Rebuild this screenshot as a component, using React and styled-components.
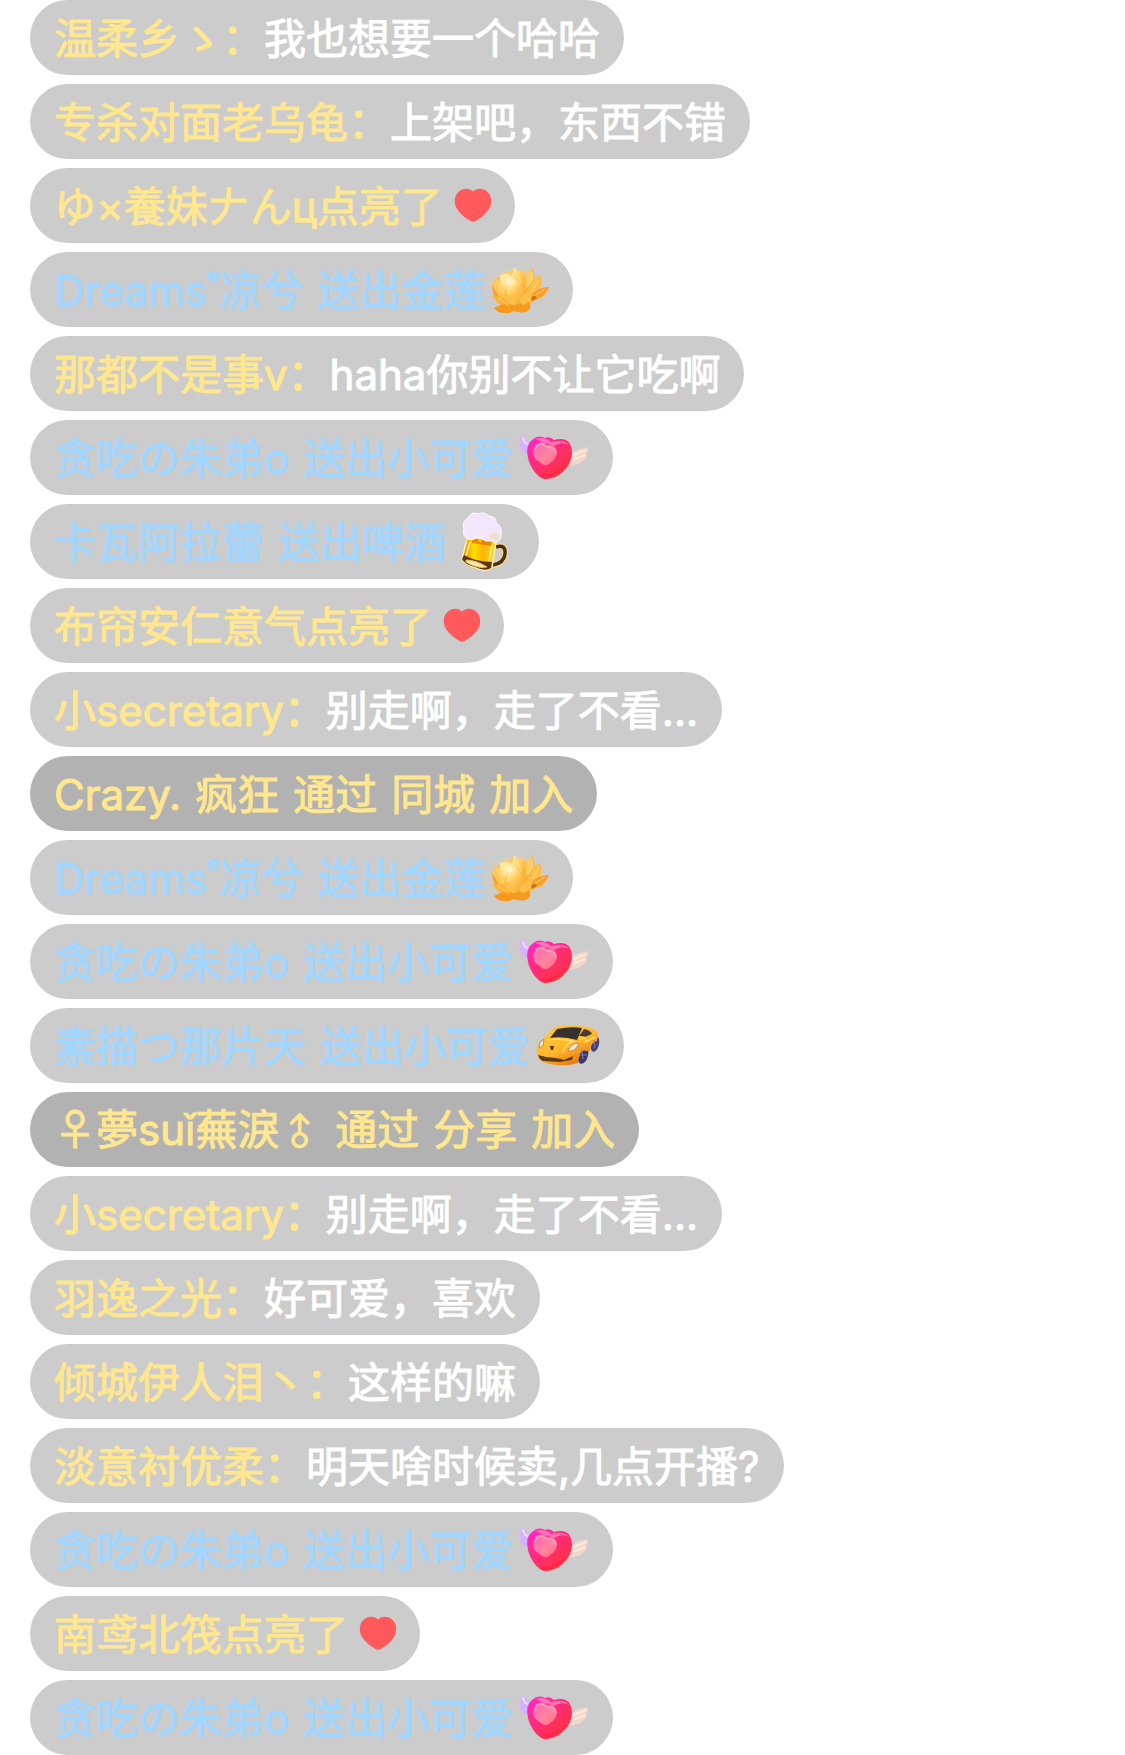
import React from 'react';
import styled, { createGlobalStyle } from 'styled-components';

const GlobalStyle = createGlobalStyle`
  * { box-sizing: border-box; }
  body {
    margin: 0;
    background: #fff;
    font-family: Inter, "Noto Sans CJK SC", "Noto Sans CJK TC", "Noto Sans CJK JP", sans-serif;
  }
`;

const Feed = styled.ul`
  display: flex;
  flex-direction: column;
  align-items: flex-start;
  gap: 9px;
  margin: 0;
  padding: 0 30px;
  list-style: none;
`;

const Bubble = styled.li`
  display: flex;
  align-items: center;
  height: 75px;
  padding: 0 24px;
  border-radius: 38px;
  background: ${(p) => (p.$join ? '#b2b2b2' : '#ccc')};
  color: ${(p) => (p.$gift ? '#a0d6ff' : '#ffe78f')};
  font-size: 42px;
  font-weight: 400;
  line-height: 60px;
  white-space: pre;
`;

const Label = styled.span`
  display: flex;
  gap: 14px;
  padding-top: 2px;
  -webkit-text-stroke: 1px currentColor;
`;

const Message = styled(Label)`
  color: #fff;
`;

const Upright = styled.span`
  display: inline-block;
  width: 42px;
  font-size: 36px;
  text-align: center;
  transform: rotate(-45deg);
`;

const Icon = styled.svg`
  flex: none;
  display: block;
  width: ${(p) => p.$w}px;
  height: 75px;
`;

const Like = () => (
  <Icon $w={48} viewBox="-2 0 48 75" role="img" aria-label="heart">
    <path
      d="M28 23.500C24 19.500 18 20 14 23.500C8.500 28 9 36 12 41C15.500 46.500 21 50.500 25.500 53Q28 54.500 30.500 53C35 50.500 40.500 46.500 44 41C47 36 47.500 28 42 23.500C38 20 32 19.500 28 23.500Z"
      fill="#ff595b"
    />
  </Icon>
);

const Lotus = () => (
  <Icon $w={64} viewBox="2 0 64 75" role="img" aria-label="lotus">
    <defs>
      <linearGradient id="petal" x1="0" y1="0" x2="1" y2="1">
        <stop offset="0" stopColor="#fff0a8" />
        <stop offset="0.5" stopColor="#ffc651" />
        <stop offset="1" stopColor="#f9a02a" />
      </linearGradient>
      <radialGradient id="petalGlow">
        <stop offset="0" stopColor="#fffbe0" />
        <stop offset="1" stopColor="#ffe47a" stopOpacity="0" />
      </radialGradient>
    </defs>
    <path d="M11 30L18 22L31 18L42 24L54 26L57 37L50 50L38 56L24 55L14 48Z" fill="#ffb641" />
    <path d="M38 32L49 15Q52 21 51 27L57 23Q60 32 56 37L66 35Q62 47 52 48Q45 52 38 48Z" fill="#ffad2f" />
    <path d="M49 16Q39 25 40 39L51 28Z" fill="#ffca5e" />
    <path d="M57 23Q45 31 44 44Q53 44 58 34Z" fill="#ffbd4b" />
    <path d="M66 35Q53 35 45 46Q59 49 66 35Z" fill="#f9a02c" />
    <path d="M47 46L52 43L54 46L50 49Z" fill="#cf7412" />
    <path d="M28 27L31 15L36 19L41 18Q45 28 42 36L34 43Z" fill="url(#petal)" />
    <path d="M9 33Q17 34 21 43L19 52Q9 45 9 33Z" fill="#f6a329" />
    <path d="M9 33L11 26Q24 28 27 43L20 51Z" fill="#ffc75a" />
    <path d="M17 23Q28 19 34 32L27 46Q16 36 17 23Z" fill="url(#petal)" />
    <path d="M9 44Q23 42 30 54L26 59Q15 53 9 44Z" fill="#ffb238" />
    <path d="M11 56Q22 49 33 54Q31 62 22 61Q14 61 11 56Z" fill="#f99818" />
    <path d="M27 57Q32 46 45 49Q51 56 43 60Q35 62 27 57Z" fill="#f69a20" />
    <path d="M31 25Q44 34 42 48Q34 57 23 48Q20 37 31 25Z" fill="url(#petal)" stroke="#f6a52c" strokeWidth=".7" />
    <path d="M20 42Q29 40 33 53Q24 54 20 42M36 50Q38 41 49 40Q50 50 40 53Z" fill="#ffc04b" />
    <path d="M19 27L26 40M34 20L38 32M13 29L21 42M50 20L45 35M56 28L49 39M15 46L26 54M62 37L51 44" fill="none" stroke="#fff0a0" strokeWidth="1" opacity=".6" />
    <circle cx="26" cy="29" r="13" fill="url(#petalGlow)" />
  </Icon>
);

const WingedHeart = () => (
  <Icon $w={76} viewBox="2 0 76 75" role="img" aria-label="winged heart">
    <defs>
      <linearGradient id="loveBody" x1="0" y1="0" x2=".8" y2="1">
        <stop offset="0" stopColor="#ff27d9" />
        <stop offset=".4" stopColor="#ff2a86" />
        <stop offset="1" stopColor="#ff3434" />
      </linearGradient>
      <linearGradient id="loveFace" x1="0" y1="0" x2="1" y2="1">
        <stop offset="0" stopColor="#ff62b8" />
        <stop offset=".6" stopColor="#ff86a0" />
        <stop offset="1" stopColor="#ff5f80" />
      </linearGradient>
    </defs>
    <path d="M18 35Q8 32 9 25Q7 20 12 15Q15 17 16 21L22 23Z" fill="#d4b3ff" />
    <path d="M12 17Q12 23 19 25" fill="none" stroke="#ecdcff" strokeWidth="2" />
    <path d="M58 33Q64 32 68 29L76 27Q78 30 76 33L75 39L71 41Q69 45 65 44Q61 47 56 44Z" fill="#f1d6c9" />
    <path d="M60 36Q68 33 75 30M60 40Q68 38 74 35" fill="none" stroke="#fff1e7" strokeWidth="2" opacity=".7" />
    <path d="M34 18Q39 16 43 20Q55 17 59 24Q63 32 59 42C54 53 42 60 33 59C26 57 19 47 17 38Q14 25 21 20Q28 14 34 18Z" fill="url(#loveBody)" />
    <path d="M25 19Q33 16 40 22Q54 19 58 25Q50 21 43 26L31 22Z" fill="#ff91bd" opacity=".7" />
    <path d="M25 24Q32 20 36 25Q45 24 46 32Q46 39 38 44Q34 47 30 43Q21 38 22 31Z" fill="url(#loveFace)" />
    <path d="M24 30Q25 24 31 24L36 27Q43 26 45 33" fill="none" stroke="#ff9fbd" strokeWidth="1.500" />
    <path d="M50 22L52 32M55 24L57 32" stroke="#dc2f59" strokeWidth="1" opacity=".5" />
    <path d="M28 54Q41 58 55 43Q47 56 34 58Z" fill="#ff1743" opacity=".5" />
  </Icon>
);

const Beer = () => (
  <Icon $w={69} viewBox="2 0 69 75" role="img" aria-label="beer">
    <defs>
      <linearGradient id="beer" x1="0" y1="0" x2="1" y2="0">
        <stop offset="0" stopColor="#e47a00" />
        <stop offset=".35" stopColor="#ffe000" />
        <stop offset=".6" stopColor="#ffb400" />
        <stop offset="1" stopColor="#ffd62a" />
      </linearGradient>
    </defs>
    <path d="M52 43Q62 40 61 50Q60 59 49 61" fill="none" stroke="#f7dc8a" strokeWidth="6" />
    <path d="M52 43Q62 40 61 50Q60 59 49 61" fill="none" stroke="#47301d" strokeWidth="3.500" />
    <path d="M24 31L52 37L48 63Q44 68 35 65Q21 61 18 55Z" fill="url(#beer)" stroke="#fff0ae" strokeWidth="1.500" />
    <path d="M20 51Q32 58 48 58L47 64Q42 68 31 63Q20 60 18 55Z" fill="#5b350f" />
    <path d="M22 56Q32 56 43 63Q33 65 22 58Z" fill="#ffeab0" stroke="#f2bd4f" strokeWidth="1" />
    <path d="M28 35L33 34L36 39L40 35L48 37L47 42L28 39Z" fill="#d86d00" opacity=".7" />
    <path d="M26 38L22 52M48 41L45 57" stroke="#fff1a0" strokeWidth="1.500" />
    <path d="M24 35Q18 32 20 25Q17 18 24 14Q27 7 34 10Q40 7 45 12Q53 13 52 19Q59 23 57 30Q58 35 52 39Q48 36 42 37Q37 33 32 34Q28 37 24 35Z" fill="#f2e6fc" stroke="#fffef5" strokeWidth="1" />
    <path d="M45 31Q53 25 56 31Q56 36 51 38Q49 34 45 35Z" fill="#f2dfcf" />
  </Icon>
);

const Car = () => (
  <Icon $w={70} viewBox="2 0 70 75" role="img" aria-label="car">
    <defs>
      <linearGradient id="carBody" x1="0" y1="0" x2=".7" y2="1">
        <stop offset="0" stopColor="#ffca31" />
        <stop offset=".6" stopColor="#ffb62d" />
        <stop offset="1" stopColor="#e66d0c" />
      </linearGradient>
    </defs>
    <ellipse cx="55" cy="47" rx="5" ry="9" transform="rotate(14 55 47)" fill="#3c3868" />
    <ellipse cx="67" cy="36" rx="4" ry="8" transform="rotate(12 67 36)" fill="#454177" />
    <path d="M9 41Q11 32 18 29L25 20Q35 16 51 18Q67 19 70 26L69 33Q63 34 62 43L58 43Q52 40 50 55Q34 60 14 54Q8 49 9 41Z" fill="url(#carBody)" />
    <path d="M22 30L29 21Q43 18 54 20L49 32Q35 28 22 30Z" fill="#36302f" />
    <path d="M51 28L56 21Q62 22 64 26L57 29Z" fill="#4b3a30" />
    <path d="M17 28L19 25L23 28M51 32L52 28L58 29L57 32Z" fill="#ffcf42" />
    <path d="M12 34L16 31L15 38L11 40ZM40 43Q43 35 51 35Q48 44 40 43Z" fill="#e8e9f7" stroke="#d88c23" strokeWidth="1" />
    <path d="M10 47L18 49Q31 50 36 52L45 48L44 52L32 54L15 53Q11 51 10 47Z" fill="#5c3a16" />
    <path d="M22 38H26L25 42H23Z" fill="#49361c" />
    <path d="M19 32Q31 30 45 33Q36 37 35 45M56 34Q64 31 68 29" fill="none" stroke="#ffdf66" strokeWidth="1.500" />
    <path d="M54 42L55 51M51 47L59 47M66 32L67 40" stroke="#7874b5" strokeWidth="1.200" />
  </Icon>
);

const ICONS = { like: Like, lotus: Lotus, heart: WingedHeart, beer: Beer, car: Car };

const HEART_GIFT = { kind: 'gift', parts: ['贪吃の朱弟o', '送出小可爱'], icon: 'heart' };
const LOTUS_GIFT = { kind: 'gift', parts: ['Dreams˚凉兮', '送出金莲'], icon: 'lotus' };
const SECRETARY = { parts: ['小secretary：'], text: '别走啊，走了不看...' };

const MESSAGES = [
  { parts: ['温柔乡ゝ：'], text: '我也想要一个哈哈' },
  { parts: ['专杀对面老乌龟：'], text: '上架吧，东西不错' },
  { parts: ['ゆ×養妹𠂇んц点亮了'], icon: 'like' },
  LOTUS_GIFT,
  { parts: ['那都不是事v：'], text: 'haha你别不让它吃啊' },
  HEART_GIFT,
  { kind: 'gift', parts: ['卡瓦阿拉蕾', '送出啤酒'], icon: 'beer' },
  { parts: ['布帘安仁意气点亮了'], icon: 'like' },
  SECRETARY,
  { kind: 'join', parts: ['Crazy.', '疯狂', '通过', '同城', '加入'] },
  LOTUS_GIFT,
  HEART_GIFT,
  { kind: 'gift', parts: ['素描つ那片天', '送出小可爱'], icon: 'car' },
  {
    kind: 'join',
    parts: [<React.Fragment key="n">♀夢suǐ蕪淚<Upright>♂</Upright></React.Fragment>, '通过', '分享', '加入'],
  },
  SECRETARY,
  { parts: ['羽逸之光：'], text: '好可爱，喜欢' },
  { parts: ['倾城伊人泪丶：'], text: '这样的嘛' },
  { parts: ['淡意衬优柔：'], text: '明天啥时候卖,几点开播?' },
  HEART_GIFT,
  { parts: ['南鸢北筏点亮了'], icon: 'like' },
  HEART_GIFT,
];

export default function App() {
  return (
    <>
      <GlobalStyle />
      <Feed>
        {MESSAGES.map((m, i) => {
          const Drawing = ICONS[m.icon];
          return (
            <Bubble key={i} $gift={m.kind === 'gift'} $join={m.kind === 'join'}>
              <Label>
                {m.parts.map((part, j) => (
                  <span key={j}>{part}</span>
                ))}
              </Label>
              {m.text && <Message>{m.text}</Message>}
              {Drawing && <Drawing />}
            </Bubble>
          );
        })}
      </Feed>
    </>
  );
}
